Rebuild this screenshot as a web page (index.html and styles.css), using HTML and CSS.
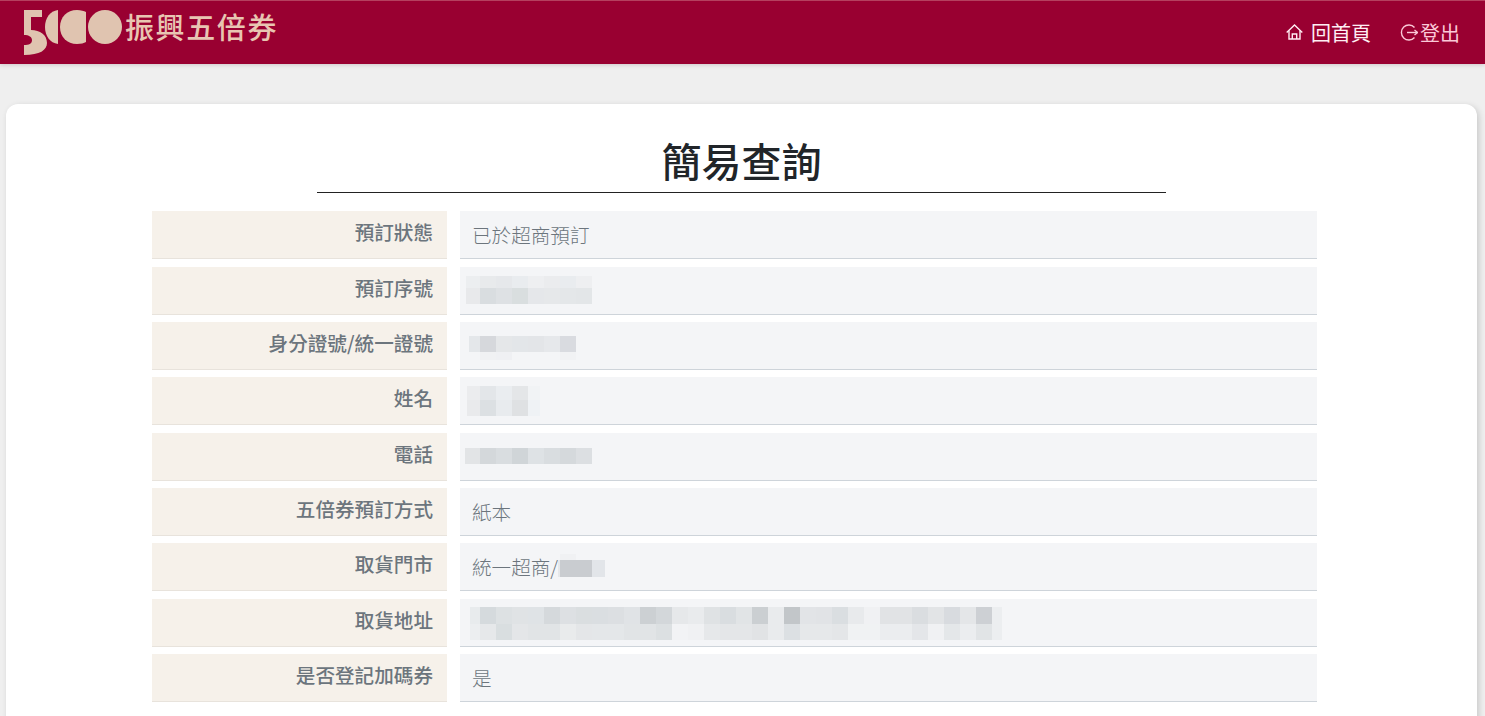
FILE: index.html
```html
<!DOCTYPE html>
<html lang="zh-Hant">
<head>
<meta charset="utf-8">
<title>簡易查詢</title>
<link rel="stylesheet" href="styles.css">
</head>
<body>
<header class="topbar">
  <a class="brand" href="#">
    <svg class="brand-mark" width="98" height="45" viewBox="0 0 98 45" aria-hidden="true">
      <path d="M0 0H18V7H7V20C16 20 23 25 23 33C23 40 16 45 0 45V35C5 35 8 34 8 30C8 27 5 25 0 25Z" fill="#e0c4b0"/>
      <path d="M34 0V34C26 33 21 26 21 17C21 8 26 1 34 0Z" fill="#e0c4b0"/>
      <path d="M53 0C57 0 60 1 62 2V32C60 33 57 34 53 34C43 34 36 27 36 17C36 7 43 0 53 0Z" fill="#e0c4b0"/>
      <circle cx="81" cy="17" r="17" fill="#e0c4b0"/>
    </svg>
    <span class="brand-name">振興五倍券</span>
  </a>
  <nav class="topnav">
    <a class="topnav-link topnav-home" href="#">
      <svg class="icon" width="17" height="16" viewBox="0 0 17 16" fill="none" stroke="currentColor" stroke-width="1.4" aria-hidden="true">
        <path d="M.7 8.5 8.5 1 16.300 8.500"/><path d="M3 6.500V15H14V6.500"/><path d="M6.300 15V10H10.700V15"/>
      </svg>
      <span>回首頁</span>
    </a>
    <a class="topnav-link topnav-out" href="#">
      <svg class="icon" width="18" height="17" viewBox="0 0 18 17" fill="none" stroke="currentColor" stroke-width="1.4" aria-hidden="true">
        <path d="M14.500 3.500A7.500 7.500 0 1 0 14.500 13.500"/><path d="M7 8.500H17.500"/><path d="M14.500 6 17.500 8.500 14.500 11"/>
      </svg>
      <span>登出</span>
    </a>
  </nav>
</header>

<main class="card">
  <h1 class="title">簡易查詢</h1>
  <dl class="info">
    <dt class="label">預訂狀態</dt>
    <dd class="value">已於超商預訂</dd>

    <dt class="label">預訂序號</dt>
    <dd class="value value-blur">
      <svg class="mosaic mosaic-serial" width="126" height="28" viewBox="0 0 126 28" shape-rendering="crispEdges" aria-hidden="true">
        <rect x="0" y="0" width="14" height="12" fill="#eceef0"/><rect x="14" y="0" width="16" height="12" fill="#e8eaec"/><rect x="30" y="0" width="16" height="12" fill="#e6e8eb"/><rect x="46" y="0" width="16" height="12" fill="#e9ecef"/><rect x="62" y="0" width="16" height="12" fill="#eeeff1"/><rect x="78" y="0" width="16" height="12" fill="#ebecee"/><rect x="94" y="0" width="16" height="12" fill="#e9ecef"/><rect x="110" y="0" width="16" height="12" fill="#eeeff1"/>
        <rect x="0" y="12" width="14" height="16" fill="#e8e9eb"/><rect x="14" y="12" width="16" height="16" fill="#d9dde0"/><rect x="30" y="12" width="16" height="16" fill="#dee1e4"/><rect x="46" y="12" width="16" height="16" fill="#d9dedf"/><rect x="62" y="12" width="16" height="16" fill="#e5e7ea"/><rect x="78" y="12" width="16" height="16" fill="#e6e8ea"/><rect x="94" y="12" width="16" height="16" fill="#e4e7e9"/><rect x="110" y="12" width="16" height="16" fill="#e3e6e8"/>
      </svg>
    </dd>

    <dt class="label">身分證號/統一證號</dt>
    <dd class="value value-blur">
      <svg class="mosaic mosaic-id" width="107" height="24" viewBox="0 0 107 24" shape-rendering="crispEdges" aria-hidden="true">
        <rect x="0" y="0" width="11" height="16" fill="#e4e7ea"/><rect x="11" y="0" width="16" height="16" fill="#d6d8dc"/><rect x="27" y="0" width="16" height="16" fill="#e5e7e9"/><rect x="43" y="0" width="16" height="16" fill="#e3e6e9"/><rect x="59" y="0" width="16" height="16" fill="#e3e5e8"/><rect x="75" y="0" width="16" height="16" fill="#e6e8eb"/><rect x="91" y="0" width="16" height="16" fill="#d9dbe0"/>
        <rect x="11" y="16" width="16" height="8" fill="#f0f1f3"/><rect x="27" y="16" width="16" height="8" fill="#eff0f3"/><rect x="91" y="16" width="16" height="8" fill="#f1f2f4"/>
      </svg>
    </dd>

    <dt class="label">姓名</dt>
    <dd class="value value-blur">
      <svg class="mosaic mosaic-name" width="73" height="30" viewBox="0 0 73 30" shape-rendering="crispEdges" aria-hidden="true">
        <rect x="0" y="0" width="13" height="14" fill="#ebecee"/><rect x="13" y="0" width="16" height="14" fill="#e3e6e9"/><rect x="29" y="0" width="16" height="14" fill="#eaedf0"/><rect x="45" y="0" width="16" height="14" fill="#e4e6e8"/><rect x="61" y="0" width="12" height="14" fill="#f1f3f5"/>
        <rect x="0" y="14" width="13" height="16" fill="#e9eaec"/><rect x="13" y="14" width="16" height="16" fill="#dce0e3"/><rect x="29" y="14" width="16" height="16" fill="#e8ebee"/><rect x="45" y="14" width="16" height="16" fill="#dfe1e3"/><rect x="61" y="14" width="12" height="16" fill="#eff2f5"/>
      </svg>
    </dd>

    <dt class="label">電話</dt>
    <dd class="value value-blur">
      <svg class="mosaic mosaic-phone" width="127" height="16" viewBox="0 0 127 16" shape-rendering="crispEdges" aria-hidden="true">
        <rect x="0" y="0" width="15" height="16" fill="#e2e4e6"/><rect x="15" y="0" width="16" height="16" fill="#d4d8db"/><rect x="31" y="0" width="16" height="16" fill="#d9dde0"/><rect x="47" y="0" width="16" height="16" fill="#d0d5d8"/><rect x="63" y="0" width="16" height="16" fill="#dee2e5"/><rect x="79" y="0" width="16" height="16" fill="#d9dde0"/><rect x="95" y="0" width="16" height="16" fill="#d5d9dc"/><rect x="111" y="0" width="16" height="16" fill="#dcdfe2"/>
      </svg>
    </dd>

    <dt class="label">五倍券預訂方式</dt>
    <dd class="value">紙本</dd>

    <dt class="label">取貨門市</dt>
    <dd class="value value-store"><span>統一超商/</span><svg class="mosaic mosaic-store" width="47" height="23" viewBox="0 0 47 23" shape-rendering="crispEdges" aria-hidden="true"><rect x="2" y="0" width="16" height="6" fill="#f0f1f3"/><rect x="0" y="6" width="2" height="17" fill="#e6e8ea"/><rect x="2" y="6" width="32" height="17" fill="#c9ccd0"/><rect x="34" y="6" width="13" height="17" fill="#e2e5e9"/></svg></dd>

    <dt class="label">取貨地址</dt>
    <dd class="value value-blur">
      <svg class="mosaic mosaic-address" width="532" height="33" viewBox="470 0 532 33" shape-rendering="crispEdges" aria-hidden="true">
        <g>
          <rect x="470" y="0" width="10" height="17" fill="#e8ebed"/><rect x="480" y="0" width="16" height="17" fill="#d5dadd"/><rect x="496" y="0" width="16" height="17" fill="#dde1e3"/><rect x="512" y="0" width="16" height="17" fill="#e0e3e5"/><rect x="528" y="0" width="16" height="17" fill="#dfe3e6"/><rect x="544" y="0" width="16" height="17" fill="#d5d9dc"/><rect x="560" y="0" width="16" height="17" fill="#dde0e3"/><rect x="576" y="0" width="16" height="17" fill="#dadee0"/><rect x="592" y="0" width="16" height="17" fill="#dadee1"/><rect x="608" y="0" width="16" height="17" fill="#dcdfe2"/><rect x="624" y="0" width="16" height="17" fill="#e0e3e6"/><rect x="640" y="0" width="16" height="17" fill="#ccd0d3"/><rect x="656" y="0" width="16" height="17" fill="#d3d7da"/><rect x="672" y="0" width="16" height="17" fill="#e6e8ea"/><rect x="688" y="0" width="16" height="17" fill="#e9ebed"/><rect x="704" y="0" width="16" height="17" fill="#dfe2e4"/><rect x="720" y="0" width="16" height="17" fill="#d9dde0"/><rect x="736" y="0" width="16" height="17" fill="#e1e4e6"/><rect x="752" y="0" width="16" height="17" fill="#cbcfd2"/><rect x="768" y="0" width="16" height="17" fill="#e9ebed"/><rect x="784" y="0" width="16" height="17" fill="#c2c6c9"/><rect x="800" y="0" width="16" height="17" fill="#e2e4e7"/><rect x="816" y="0" width="16" height="17" fill="#e1e3e6"/><rect x="832" y="0" width="16" height="17" fill="#dadee1"/><rect x="848" y="0" width="16" height="17" fill="#e8eaec"/><rect x="864" y="0" width="16" height="17" fill="#f0f1f3"/><rect x="880" y="0" width="16" height="17" fill="#e1e3e5"/><rect x="896" y="0" width="16" height="17" fill="#e1e3e5"/><rect x="912" y="0" width="16" height="17" fill="#dadde0"/><rect x="928" y="0" width="16" height="17" fill="#e2e4e6"/><rect x="944" y="0" width="16" height="17" fill="#d8dbdf"/><rect x="960" y="0" width="16" height="17" fill="#e4e6e8"/><rect x="976" y="0" width="16" height="17" fill="#cdd0d4"/><rect x="992" y="0" width="10" height="17" fill="#eceef0"/>
        </g>
        <g>
          <rect x="470" y="17" width="10" height="16" fill="#eceef0"/><rect x="480" y="17" width="16" height="16" fill="#e6e8ea"/><rect x="496" y="17" width="16" height="16" fill="#d9dee0"/><rect x="512" y="17" width="16" height="16" fill="#e4e6e8"/><rect x="528" y="17" width="32" height="16" fill="#e1e4e6"/><rect x="560" y="17" width="16" height="16" fill="#e9ebec"/><rect x="576" y="17" width="16" height="16" fill="#e4e6e8"/><rect x="592" y="17" width="32" height="16" fill="#e4e7e9"/><rect x="624" y="17" width="32" height="16" fill="#e1e4e6"/><rect x="656" y="17" width="16" height="16" fill="#dce0e2"/><rect x="672" y="17" width="16" height="16" fill="#f2f3f5"/><rect x="688" y="17" width="16" height="16" fill="#f0f1f3"/><rect x="704" y="17" width="16" height="16" fill="#e6e8ea"/><rect x="720" y="17" width="32" height="16" fill="#e4e6e8"/><rect x="752" y="17" width="16" height="16" fill="#e1e3e5"/><rect x="768" y="17" width="16" height="16" fill="#e9ebed"/><rect x="784" y="17" width="16" height="16" fill="#dce0e3"/><rect x="800" y="17" width="32" height="16" fill="#e6e8ea"/><rect x="832" y="17" width="16" height="16" fill="#e4e6e8"/><rect x="848" y="17" width="32" height="16" fill="#f0f2f3"/><rect x="880" y="17" width="32" height="16" fill="#ebedef"/><rect x="912" y="17" width="16" height="16" fill="#e4e6e9"/><rect x="928" y="17" width="16" height="16" fill="#f0f1f3"/><rect x="944" y="17" width="16" height="16" fill="#e4e7e9"/><rect x="960" y="17" width="16" height="16" fill="#ebedef"/><rect x="976" y="17" width="16" height="16" fill="#e1e4e6"/><rect x="992" y="17" width="10" height="16" fill="#eceef0"/>
        </g>
      </svg>
    </dd>

    <dt class="label">是否登記加碼券</dt>
    <dd class="value">是</dd>
  </dl>
</main>
</body>
</html>
```
FILE: styles.css
```css
* {
  box-sizing: border-box;
}

html,
body {
  height: 100%;
  margin: 0;
  overflow: hidden;
}

body {
  background: #efefef;
  font-family: "Noto Sans CJK TC", "Liberation Sans", sans-serif;
}

a {
  color: inherit;
  text-decoration: none;
}

.topbar {
  display: flex;
  justify-content: space-between;
  align-items: flex-start;
  height: 64px;
  padding: 10px 25px 0 24px;
  background: #990031;
  border-top: 1px solid #b5405f;
  box-shadow: 0 1px 4px rgba(120, 80, 90, 0.25);
}

.brand {
  display: flex;
  align-items: flex-start;
  gap: 3px;
  margin-top: -1px;
}

.brand-mark {
  display: block;
  flex: none;
}

.brand-name {
  margin-top: -1px;
  font-size: 29px;
  line-height: 34px;
  font-weight: 500;
  letter-spacing: 1.6px;
  color: #e8c5b2;
}

.topnav {
  display: flex;
  gap: 29px;
  padding-top: 8px;
}

.topnav-link {
  display: flex;
  align-items: center;
  font-size: 20px;
  line-height: 27px;
  font-weight: 400;
}

.topnav-home {
  gap: 8px;
  color: #ffeef3;
}

.topnav-out {
  gap: 2px;
  color: #fbc9d8;
}

.icon {
  display: block;
  flex: none;
  margin-top: -1px;
}

.card {
  margin: 40px 8px 0 6px;
  height: 700px;
  padding: 29px 146px 0;
  background: #ffffff;
  border-radius: 12px;
  box-shadow: 2px 2px 6px rgba(0, 0, 0, 0.16);
}

.title {
  width: 849px;
  margin: 0 auto 18.2px;
  padding-bottom: 4px;
  border-bottom: 1px solid #222222;
  font-size: 40px;
  line-height: 55px;
  font-weight: 500;
  text-align: center;
  color: #212529;
}

.info {
  display: grid;
  grid-template-columns: 295px 857px;
  column-gap: 13px;
  row-gap: 7.35px;
  grid-auto-rows: 48px;
  margin: 0;
}

.label {
  padding: 6px 14px 0 0;
  background: #f6f1ea;
  border-bottom: 1px solid #e8e3dc;
  font-size: 19.6px;
  line-height: 30px;
  font-weight: 500;
  text-align: right;
  color: #6c757d;
}

.value {
  margin: 0;
  padding: 9px 0 0 12px;
  background: #f4f5f7;
  border-bottom: 1px solid #ced4da;
  font-size: 19.6px;
  line-height: 30px;
  font-weight: 300;
  color: #6c757d;
}

.value-blur {
  padding: 0;
}

.mosaic {
  display: block;
}

.mosaic-serial {
  margin: 9px 0 0 6px;
}

.mosaic-id {
  margin: 14px 0 0 9px;
}

.mosaic-name {
  margin: 9px 0 0 7px;
}

.mosaic-phone {
  margin: 15px 0 0 5px;
}

.mosaic-address {
  margin: 8px 0 0 10px;
}

.value-store {
  display: flex;
  align-items: flex-start;
}

.mosaic-store {
  flex: none;
  margin-top: 2px;
}
```
